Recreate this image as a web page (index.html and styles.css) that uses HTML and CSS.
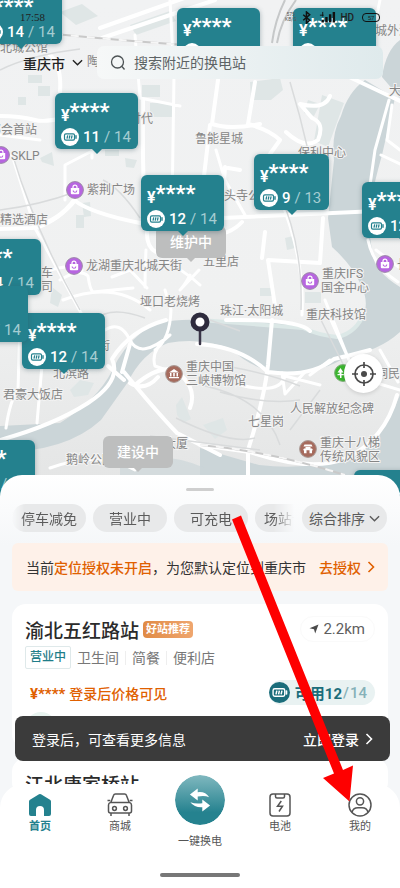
FILE: index.html
```html
<!DOCTYPE html>
<html lang="zh-CN">
<head>
<meta charset="utf-8">
<meta name="viewport" content="width=device-width, initial-scale=1">
<title>换电站地图</title>
<link rel="stylesheet" href="styles.css">
</head>
<body>
<svg width="0" height="0" class="defs" aria-hidden="true">
  <symbol id="battery" viewBox="0 0 18 18">
    <rect x="3.500" y="5.800" width="10" height="6.400" rx="1.400" fill="none" stroke="currentColor" stroke-width="1.200"/>
    <path d="M15 7.800v2.400" stroke="currentColor" stroke-width="1.400" stroke-linecap="round"/>
    <path d="M6 10.600l.7-3.200M8.200 10.600l.7-3.200M10.400 10.600l.7-3.200" stroke="currentColor" stroke-width="1.300"/>
  </symbol>
  <symbol id="bag" viewBox="-9 -9 18 18">
    <circle r="8.4" fill="#b765e0" stroke="#9d8ba8" stroke-width="1"/>
    <path d="M-4.2-2h8.4v5.2q0 1-1 1h-6.4q-1 0-1-1z" fill="#fff"/>
    <path d="M-2-2v-.8a2 2 0 0 1 4 0v.8" fill="none" stroke="#fff" stroke-width="1.2"/>
    <path d="M-1.8.4a1.8 1.8 0 0 0 3.6 0" fill="none" stroke="#b765e0" stroke-width="1.1"/>
  </symbol>
  <symbol id="chevron-down" viewBox="0 0 12 12">
    <path d="M1 3.500L6 8.500l5-5" fill="none" stroke="currentColor" stroke-width="1.500"/>
  </symbol>
  <symbol id="chevron-right" viewBox="0 0 12 12">
    <path d="M3.500 1L8.500 6l-5 5" fill="none" stroke="currentColor" stroke-width="1.600"/>
  </symbol>
</svg>

<main class="app">
  <section class="map" aria-label="地图">
    <svg class="map-art" viewBox="0 0 400 500" preserveAspectRatio="xMinYMin slice">
      <defs>
        <linearGradient id="shade" x1="0" y1="0" x2="0" y2="1">
          <stop offset="0" stop-color="#f1f2f3"/><stop offset=".6" stop-color="#f0f1f1"/><stop offset="1" stop-color="#e3e4e4"/>
        </linearGradient>
      </defs>
      <rect width="400" height="500" fill="url(#shade)"/>
      <g fill="#dfe6e6">
        <path d="M28 75h14v8H28zM38 86h12v10H38zM18 97h8v8h-8zM60 12l22-8 16 12-22 9zM130 25l40-14 6 10-40 14zM142 85h18v12h-18zM150 103h22v14h-22zM250 82l30-4 3 12-12 10h-20zM322 95l22 8-16 44-14-6zM308 100l12 4-6 12-10-3zM40 158l12-6 2 14-12-4zM82 203l8-1 1 14-7 1zM76 215h8v13h-8zM125 158l12 2-3 8-8-1zM52 287l10 8-4 12-8-4zM70 390l10-10 14 3-6 12-14 2zM176 405l6-8 9 22-8 4-6-8zM203 425l20-7 4 12-12 9zM260 288h12v8h-12zM305 292h16v11h-16zM340 15l18-6 8 10-18 7zM285 238l8-2 2 12-8 2zM105 150h14v6h-14z"/>
      </g>
      <g fill="#cbd5d8">
        <path d="M365 80Q348 92 341 116Q331 135 334 160L328 218L332 247Q352 265 360 283Q368 298 365 311Q357 333 337 337Q320 337 303 328Q282 321 250 321L200 320Q160 318 143 331Q122 348 112 371Q97 400 60 423L0 426V452Q66 452 101 420L128 382Q142 353 168 343Q200 337 231 349Q251 368 278 373Q323 374 347 356Q379 351 400 332V287Q372 270 372 250L367 218Q374 183 382 155L395 98Z"/>
        <path d="M382 77Q386 50 400 40v58zM400 395Q386 431 356 455Q312 471 259 465L200 448v52h200z"/>
        <path d="M120 465Q160 448 205 468v32h-85z" opacity=".65"/>
      </g>
      <path d="M365 311Q357 333 337 337Q318 335 303 328L200 320" fill="none" stroke="#dce8e7" stroke-width="4"/>
      <g fill="none" stroke="#fff" stroke-linecap="round" stroke-linejoin="round">
        <g stroke-width="4">
          <path d="M50 55Q62 65 60 92M0 116Q20 116 35 120T90 110M0 229L32 228Q60 220 74 200Q90 213 140 223L200 219L400 210M143 100Q142 190 147 230Q146 247 156 252M272 320L268 365Q264 400 248 450V500M200 445L250 452Q310 472 345 459Q385 440 397 395M130 344L122 372M108 366L124 380M124 372Q155 410 177 433L220 455M345 75L400 101M130 383Q145 392 158 377M226 320Q300 319 310 331"/>
          <path d="M100 28L145 12L190-4M102 38L170 15L215 0M330 96Q325 110 300 104L312 118Q325 123 318 140Q305 150 286 132M218 80L212 124Q230 130 260 124M255 82L248 124Q270 130 280 140L260 168M210 125L200 210M240 170L228 168M225 167L222 210M323 218L320 263L268 260L275 306M242 222Q230 235 210 235M265 232L262 258M0 440Q54 425 88 403T112 359Q130 330 166 320M197 344Q240 346 268 372Q310 378 334 359Q352 355 370 350M135 385Q165 360 181 375T190 408"/>
        </g>
        <g stroke-width="3">
          <path d="M12 155L35 228Q70 292 82 315M94 150L65 165V200M76 200Q60 220 35 229M92 158L92 118M0 135L40 140M60 280Q80 268 88 276Q90 290 93 292L133 288M146 250Q145 270 145 287M112 277L130 270L147 288M200 285Q184 270 162 260M63 300Q115 280 150 310M190 275Q185 285 180 290L199 270M170 0L174 75L172 210M135 35L140 98L180 106M20 320L18 390Q10 400 6 428M42 365L37 423M105 330Q120 320 130 340T170 335M170 335Q150 350 155 366L180 375M240 385Q280 395 285 376L320 385M310 375L330 360M282 373L285 394L305 372M350 375L400 390M380 350L398 382M330 318L349 360M325 300L351 365M380 0Q375 25 370 45M389 100L375 150L370 185M392 105L387 140L400 150M381 155L400 164M368 205Q385 210 400 190M376 250L400 268M368 240Q373 266 398 282M50 468Q100 450 135 470M155 350Q170 340 171 310L165 290M50 270Q80 263 82 270M280 198Q305 260 302 315M245 215L225 180L216 150"/>
        </g>
      </g>
      <g fill="none" stroke="#d9dbdc" stroke-width="1.500">
        <path d="M0 210Q40 205 75 192M103 180Q120 188 140 218M13 156Q35 230 80 310M200 362Q260 370 300 386M205 386Q265 399 280 445M280 195Q303 245 301 310M176 418Q230 445 255 438M210 320L240 331M0 70Q30 55 80 49M320 390L290 430M290 82Q300 115 308 150M300 400Q265 405 220 392M95 320Q110 305 145 318M260 450Q180 440 150 436M320 318L344 366"/>
      </g>
      <g fill="none" stroke-width="2">
        <path d="M55 34Q115 40 185 45M200 445Q270 451 345 475" stroke="#c9c9c9"/>
        <path d="M55 34Q115 40 185 45M200 445Q270 451 345 475" stroke="#f6f6f6" stroke-dasharray="8 8"/>
        <path d="M272 43Q275 20 285 0M277 43Q281 20 296 0" stroke="#c6c8c9"/>
      </g>
      <g class="place">
        <text x="0" y="52">北城公馆</text><text x="87" y="66">陶</text><text x="375" y="35">城外滩</text>
        <text x="-11" y="134">邓会首站</text><text x="129" y="123">时代</text><text x="195" y="143">鲁能星城</text>
        <text x="298" y="157">保利中心</text><text x="389" y="95">大坪</text><text x="11" y="160">SKLP</text>
        <text x="87" y="194">紫荆广场</text><text x="0" y="224">精选酒店</text><text x="224" y="200">头寺公园</text>
        <text x="86" y="270">龙湖重庆北城天街</text><text x="41" y="277">车</text><text x="41" y="291">司</text>
        <text x="203" y="266">五里店</text><text x="140" y="306">垭口老烧烤</text>
        <text x="322" y="278">重庆IFS</text><text x="321" y="292">国金中心</text><text x="397" y="269">长嘉汇</text>
        <text x="220" y="315">珠江·太阳城</text><text x="306" y="319">重庆科技馆</text>
        <text x="186" y="371">重庆中国</text><text x="186" y="385">三峡博物馆</text>
        <text x="53" y="378">北滨路</text><text x="98" y="350">街</text><text x="3" y="399">君豪大饭店</text>
        <text x="290" y="413">人民解放纪念碑</text><text x="248" y="426">七星岗</text><text x="376" y="378">洞民街</text>
        <text x="164" y="448">大厦</text><text x="66" y="464">鹅岭公园</text>
        <text x="320" y="447">重庆十八梯</text><text x="320" y="461">传统风貌区</text>
      </g>
      <use href="#bag" x="-8" y="146" width="18" height="18"/>
      <use href="#bag" x="66" y="181" width="18" height="18"/>
      <use href="#bag" x="65" y="257" width="18" height="18"/>
      <use href="#bag" x="301" y="272" width="18" height="18"/>
      <use href="#bag" x="376" y="255" width="18" height="18"/>
      <g transform="translate(174 374)">
        <circle r="8.400" fill="#a66b5d" stroke="#a99a95"/>
        <path d="M-5-1.500L0-5l5 3.500zM-4-1h1.500v3.500H-4zM-.8-1H.8v3.500H-.8zM2.500-1H4v3.500H2.500zM-5 3H5v1.300H-5z" fill="#fff"/>
      </g>
      <g transform="translate(308 449)">
        <circle r="8.400" fill="#a66b5d" stroke="#a99a95"/>
        <path d="M-3.500-4.500h7l1 2h-9zM-2.500-2h5v1.500h-5zM-4-.5h8l1 1.800H-5zM-4 1.300h2.500v3H-4zM1.500 1.300H4v3H1.500z" fill="#fff"/>
      </g>
      <g transform="translate(343 373)">
        <circle r="8.400" fill="#3bb52f" stroke="#7fae7a"/>
        <path d="M-2.500-5l3 4.500h-2V1h2.300v1.200h-2.300V5h-1.500V2.200h-2.500V1h2v-1.500h-2z" fill="#fff"/>
      </g>
    </svg>

    <span class="state state-repair">维护中</span>
    <span class="state state-build">建设中</span>

    <button class="pin p1"><span class="pin-price"><i>¥</i>****</span><span class="pin-count"><svg><use href="#battery"/></svg><b>14</b> / 14</span></button>
    <button class="pin p2"><span class="pin-price"><i>¥</i>****</span><span class="pin-count"><svg><use href="#battery"/></svg><b>10</b> / 14</span></button>
    <button class="pin p3"><span class="pin-price"><i>¥</i>****</span><span class="pin-count"><svg><use href="#battery"/></svg><b>12</b> / 13</span></button>
    <button class="pin p4"><span class="pin-price"><i>¥</i>****</span><span class="pin-count"><svg><use href="#battery"/></svg><b>11</b> / 14</span></button>
    <button class="pin p5"><span class="pin-price"><i>¥</i>****</span><span class="pin-count"><svg><use href="#battery"/></svg><b>12</b> / 14</span></button>
    <button class="pin p6"><span class="pin-price"><i>¥</i>****</span><span class="pin-count"><svg><use href="#battery"/></svg><b>9</b> / 13</span></button>
    <button class="pin p7"><span class="pin-price"><i>¥</i>****</span><span class="pin-count"><svg><use href="#battery"/></svg><b>12</b> / 14</span></button>
    <button class="pin p8"><span class="pin-price"><i>¥</i>****</span><span class="pin-count"><svg><use href="#battery"/></svg><b>14</b> / 14</span></button>
    <button class="pin p10"><span class="pin-price"><i>¥</i>****</span><span class="pin-count"><svg><use href="#battery"/></svg><b>12</b> / 14</span></button>
    <button class="pin p9"><span class="pin-price"><i>¥</i></span><span class="pin-count"><svg><use href="#battery"/></svg><b>11</b> / 14</span></button>
    <button class="pin p11"><span class="pin-price"><i>¥</i>****</span><span class="pin-count"><svg><use href="#battery"/></svg><b>13</b> / 14</span></button>
    <button class="pin p12"><span class="pin-price"><i>¥</i>****</span></button>

    <svg class="here" viewBox="0 0 20 34" aria-hidden="true">
      <path d="M10 18v14" stroke="#3a3648" stroke-width="2.500" stroke-linecap="round"/>
      <circle cx="10" cy="10" r="7" fill="#fff" stroke="#2e2b3d" stroke-width="5"/>
    </svg>

    <button class="locate" aria-label="定位">
      <svg viewBox="0 0 24 24" fill="none" stroke="#4a4a4a" stroke-width="1.700"><circle cx="12" cy="12" r="9"/><path d="M12 0v6M12 18v6M0 12h6M18 12h6"/><circle cx="12" cy="12" r="3" fill="#4a4a4a" stroke="none"/></svg>
    </button>

    <header class="top">
      <div class="status">
        <time>17:58</time>
        <span class="speed">575<br>KB/S</span>
        <svg class="signals" viewBox="0 0 36 14" aria-hidden="true">
          <path d="M1 4l7 6-3.500 3V1L8 4l-7 6" fill="none" stroke="#111" stroke-width="1.600"/>
          <path d="M22 9.500v3M26 6.500v6M30 3.500v9M34 1v11.500" stroke="#111" stroke-width="2.600"/>
          <path d="M19 4.500h4M22 1v5" stroke="#111"/>
        </svg>
        <span class="hd">HD</span>
        <span class="power">57</span>
      </div>
      <form class="find">
        <button class="city" type="button">重庆市<svg><use href="#chevron-down"/></svg></button>
        <label class="search">
          <svg viewBox="0 0 16 16" fill="none" stroke="#4d5355" stroke-width="1.300"><circle cx="7.500" cy="7" r="6"/><path d="M12 11.500l2.500 3"/></svg>
          <input type="search" placeholder="搜索附近的换电站" aria-label="搜索附近的换电站">
        </label>
      </form>
    </header>
  </section>

  <section class="sheet">
    <div class="handle"></div>
    <div class="filters">
      <div class="chips">
        <button>停车减免</button><button>营业中</button><button>可充电</button><button>场站设施</button>
      </div>
      <button class="sort">综合排序<svg><use href="#chevron-down"/></svg></button>
    </div>
    <div class="notice">
      <span>当前<strong>定位授权未开启</strong>，为您默认定位到重庆市</span>
      <a href="#">去授权<svg><use href="#chevron-right"/></svg></a>
    </div>
    <article class="card">
      <div class="row title-row">
        <h2>渝北五红路站</h2><span class="pick">好站推荐</span>
        <span class="distance"><svg viewBox="0 0 10 10"><path d="M9.500.5L6.200 9.500 5 5.300.5 4.200z" fill="#4b4b4b"/></svg>2.2km</span>
      </div>
      <div class="row tags"><span class="open">营业中</span><span>卫生间</span><span>简餐</span><span>便利店</span></div>
      <div class="row price-row">
        <span class="price"><b>¥****</b>登录后价格可见</span>
        <span class="stock"><svg><use href="#battery"/></svg><b>可用12</b><span>/</span>14</span>
      </div>
      <div class="more"></div>
    </article>
    <article class="card">
      <div class="row title-row"><h2>江北唐家桥站</h2></div>
    </article>
  </section>

  <div class="dock">
    <div class="toast"><span>登录后，可查看更多信息</span><a href="#">立即登录<svg><use href="#chevron-right"/></svg></a></div>
    <nav class="tabs">
      <a href="#" class="active">
        <svg viewBox="0 0 24 24"><path d="M1 8.500Q1 7.300 2 6.700L11 1.300q1-.6 2 0l9 5.400q1 .6 1 1.800V21q0 2-2 2h-5v-6a4 4 0 0 0-8 0v6H3q-2 0-2-2z" fill="#24818e"/></svg>
        <span>首页</span></a>
      <a href="#">
        <svg class="wide" viewBox="0 0 26 24" fill="none" stroke="#555" stroke-width="1.500"><path d="M3.800 9.500L6.600 2.300Q7 1 8.400 1h9.200q1.400 0 1.800 1.300l2.800 7.200M.5 7.500h2.700M22.800 7.500h2.700M3.500 9.500h19Q24.500 10 24.500 12v6q0 2-2 2h-19q-2 0-2-2v-6q0-2 2-2.500zM4 20v3M22 20v3"/><circle cx="7.500" cy="15.500" r="1.900"/><circle cx="18.500" cy="15.500" r="1.900"/></svg>
        <span>商城</span></a>
      <a href="#" class="swap">
        <span class="orb"><svg viewBox="0 0 24 26" fill="#fff"><path d="M1 7L9.500.5v4Q18 3.500 22 10q-5-2.500-12.500-.8v4.300z"/><path d="M23 19l-8.500-6.500v4Q7 17.500 1.500 15.500 6 21.500 14.500 21v4.500z"/></svg></span>
        <span>一键换电</span></a>
      <a href="#">
        <svg viewBox="0 0 24 24" fill="none" stroke="#555" stroke-width="1.500"><rect x="2" y="1" width="20" height="22" rx="3"/><path d="M7.500 1v2.500Q7.500 5 9 5h6q1.500 0 1.500-1.500V1M13.300 8L9.500 13.200h5L11 18.500"/></svg>
        <span>电池</span></a>
      <a href="#">
        <svg viewBox="0 0 24 24" fill="none" stroke="#555" stroke-width="1.500"><circle cx="12" cy="12" r="11"/><circle cx="12" cy="8.300" r="3.600"/><path d="M4 19.500Q5 14.800 10 14.800h4q5 0 6 4.700"/></svg>
        <span>我的</span></a>
    </nav>
  </div>

  <svg class="arrow" viewBox="0 0 122 288" aria-hidden="true"><path d="M0 4.500L9 .5 111 255l10-4.500-3.500 36L91 263l11-4.500z" fill="#fe0000"/></svg>
</main>
</body>
</html>
```
FILE: styles.css
```css
* { box-sizing: border-box; }
body {
  margin: 0;
  font-family: Roboto, "Noto Sans CJK SC", sans-serif;
  font-size: 14px;
  color: #333;
}
button, input { font: inherit; color: inherit; border: 0; padding: 0; margin: 0; background: none; }
a { color: inherit; text-decoration: none; }
.defs { position: absolute; }
.app { position: relative; height: 100vh; overflow: hidden; background: #f5f7f9; }

/* Map */
.map { position: relative; height: 500px; overflow: hidden; }
.map-art { display: block; width: 100%; height: 100%; }
.place { font-size: 12px; fill: #858585; paint-order: stroke; stroke: #f3f3f3; stroke-width: 2px; }

.pin {
  position: absolute;
  width: 83px;
  height: 56px;
  padding: 5px 0 0 6px;
  border-radius: 6px;
  background: #24818e;
  color: #fff;
  text-align: left;
  box-shadow: 0 1px 5px rgba(50, 80, 90, .4);
}
.pin::after {
  content: "";
  position: absolute;
  left: 50%;
  top: 100%;
  margin-left: -5px;
  border: 5px solid transparent;
  border-top-color: #24818e;
  border-bottom: 0;
}
.pin-price { display: flex; height: 26px; font-size: 22px; font-weight: 700; line-height: 22px; }
.pin-price i { font-size: 16px; line-height: 30px; font-style: normal; }
.pin-count { display: flex; align-items: center; height: 20px; gap: 4px; font-size: 15px; color: #a5cdd2; }
.pin-count b { color: #fff; font-weight: 500; }
.pin-count svg { width: 18px; height: 18px; border-radius: 50%; background: #fff; color: #24818e; }
.p1 { left: -21px; top: -12px; }
.p2 { left: 177px; top: 8px; }
.p3 { left: 293px; top: 8px; }
.p4 { left: 55px; top: 93px; }
.p5 { left: 141px; top: 175px; }
.p6 { left: 254px; top: 154px; width: 75px; }
.p7 { left: 362px; top: 182px; }
.p8 { left: -42px; top: 239px; }
.p9 { left: -55px; top: 286px; }
.p10 { left: 22px; top: 313px; }
.p11 { left: -48px; top: 440px; }
.p12 { left: 354px; top: 470px; }

.state {
  position: absolute;
  padding: 0 14px;
  border-radius: 6px;
  background: #bdbebe;
  color: #fff;
  font-size: 14px;
  font-weight: 500;
  line-height: 32px;
}
.state::after {
  content: "";
  position: absolute;
  left: 50%;
  top: 100%;
  margin-left: -4px;
  border: 4px solid transparent;
  border-top-color: #bdbebe;
  border-bottom: 0;
}
.state-repair { left: 156px; top: 226px; }
.state-build { left: 103px; top: 436px; }
.here { position: absolute; left: 190px; top: 312px; width: 20px; height: 34px; }
.locate {
  position: absolute;
  right: 17px;
  top: 354px;
  display: grid;
  place-items: center;
  width: 39px;
  height: 39px;
  border-radius: 50%;
  background: #fff;
  box-shadow: 0 1px 4px rgba(0, 0, 0, .15);
}
.locate svg { width: 24px; height: 24px; }

/* Status and search, over the map */
.top { position: absolute; inset: 0 0 auto; }
.status { display: flex; align-items: center; height: 34px; padding: 0 20px; color: #222; }
.status time { flex: 1; font-family: "Liberation Serif", serif; font-size: 11px; }
.speed { font-size: 5px; line-height: 5px; text-align: center; color: #555; margin-right: 6px; }
.signals { width: 34px; height: 13px; }
.hd { font-size: 10px; font-weight: 500; margin: 0 8px 0 4px; }
.power { width: 18px; border: 1px solid #111; border-radius: 4px; font-size: 6px; line-height: 7px; text-align: center; }
.find { display: flex; margin: 12px 17px 0 23px; }
.city { display: flex; align-items: center; gap: 7px; width: 74px; font-weight: 500; white-space: nowrap; color: #222; }
.city svg { width: 11px; height: 11px; }
.search {
  flex: 1;
  display: flex;
  align-items: center;
  gap: 8px;
  height: 33px;
  padding-left: 13px;
  border-radius: 7px;
  background: linear-gradient(90deg, #f6f8f8, #dfeaec);
}
.search svg { width: 16px; height: 16px; }
.search input { flex: 1; min-width: 0; outline: 0; }
.search input::placeholder { color: #5d6365; opacity: 1; }

/* Station list */
.sheet {
  position: relative;
  margin-top: -25px;
  padding: 13px 12px 0;
  border-radius: 22px 22px 0 0;
  background: linear-gradient(#fff, #f5f7f9 70px);
}
.handle { width: 28px; height: 3px; margin: 0 auto 13px; border-radius: 2px; background: #cfcfcf; }
.filters { display: flex; justify-content: space-between; gap: 8px; margin-right: 1px; }
.chips {
  display: flex;
  gap: 7px;
  width: 282px;
  overflow: hidden;
  -webkit-mask-image: linear-gradient(90deg, transparent, #000 12px, #000 262px, transparent);
  mask-image: linear-gradient(90deg, transparent, #000 12px, #000 262px, transparent);
}
.chips button, .sort {
  flex: none;
  min-width: 74px;
  height: 28px;
  padding: 0 9px;
  border-radius: 14px;
  background: #e8e9ea;
  color: #5b5b5b;
}
.sort { display: flex; align-items: center; gap: 4px; padding: 0 7px; }
.sort svg { width: 11px; height: 11px; }
.notice {
  display: flex;
  justify-content: space-between;
  align-items: center;
  height: 48px;
  margin: 11px 0 13px;
  padding: 0 11px 0 14px;
  border-radius: 6px;
  background: #fef1e9;
  white-space: nowrap;
}
.notice strong { color: #e06000; font-weight: 500; }
.notice a { display: flex; align-items: center; gap: 4px; color: #e06000; font-weight: 500; }
.notice svg { width: 12px; height: 12px; }
.card { margin-bottom: 10px; padding: 12px 13px 0; border-radius: 14px; background: #fff; }
.row { display: flex; align-items: center; }
.title-row { height: 26px; gap: 4px; }
h2 { margin: 0; font-size: 19px; font-weight: 500; color: #2b2b2b; }
.pick {
  padding: 0 3px;
  border-radius: 4px;
  background: linear-gradient(90deg, #e08a45, #efa66e);
  color: #fff;
  font-size: 11px;
  font-weight: 700;
  line-height: 17px;
}
.distance {
  display: flex;
  align-items: center;
  gap: 4px;
  height: 26px;
  margin-left: auto;
  padding: 0 9px 0 8px;
  border: 1px solid #fafafa;
  border-radius: 13px;
  color: #5e5e5e;
  font-size: 15px;
}
.distance svg { width: 10px; height: 10px; }
.tags { height: 23px; margin-top: 4px; color: #777; }
.tags span + span { padding: 0 6px; line-height: 14px; }
.tags span + span + span { border-left: 1px solid #eee; }
.tags .open { padding: 0 4px; border: 1px solid #dfe9ea; border-radius: 2px; color: #1f7d89; font-size: 12px; font-weight: 500; line-height: 21px; }
.price-row { justify-content: space-between; height: 25px; margin-top: 11px; }
.price { padding-left: 5px; color: #e06000; font-weight: 500; }
.price b { margin-right: 4px; font-size: 15px; font-weight: 700; }
.stock {
  display: flex;
  align-items: center;
  height: 25px;
  padding-right: 8px;
  border-radius: 13px;
  background: #e9f2f2;
  color: #86b1b8;
  font-size: 15px;
  font-weight: 500;
}
.stock b { color: #1b6d7b; font-weight: 700; }
.stock span { margin: 0 1px; }
.stock svg { width: 21px; height: 21px; margin-right: 5px; border-radius: 50%; background: #1b6d7b; color: #fff; }
.more { width: 32px; height: 36px; margin: 7px 0 3px; border-radius: 16px; background: #e9f4f0; }

/* Login prompt and tab bar */
.dock { position: absolute; inset: auto 0 0; }
.toast {
  display: flex;
  justify-content: space-between;
  align-items: center;
  height: 45px;
  margin: 0 10px 23px 15px;
  padding: 0 15px 0 17px;
  border-radius: 8px;
  background: #3b3b3b;
  color: #fff;
}
.toast a { display: flex; align-items: center; gap: 4px; font-weight: 500; }
.toast svg { width: 12px; height: 12px; }
.tabs {
  position: relative;
  display: grid;
  grid-template-columns: repeat(5, 1fr);
  height: 104px;
  padding-top: 9px;
  border-radius: 24px 24px 0 0;
  background: #fff;
}
.tabs::after {
  content: "";
  position: absolute;
  left: 40%;
  right: 40%;
  bottom: 11px;
  height: 4px;
  border-radius: 2px;
  background: #777;
}
.tabs a { display: flex; flex-direction: column; align-items: center; gap: 2px; font-size: 11px; line-height: 16px; color: #555; }
.tabs a > svg { width: 24px; height: 24px; }
.tabs a > .wide { width: 26px; }
.tabs .active { color: #24818e; font-weight: 700; }
.tabs .swap { margin-top: -27px; gap: 0; }
.orb {
  display: grid;
  place-items: center;
  width: 68px;
  height: 68px;
  border: 9px solid #fff;
  border-radius: 50%;
  background: linear-gradient(#80b8bf, #25828f 75%) padding-box;
}
.orb svg { width: 22px; height: 26px; }

.arrow { position: absolute; left: 232px; top: 515px; width: 122px; height: 288px; pointer-events: none; }
```
